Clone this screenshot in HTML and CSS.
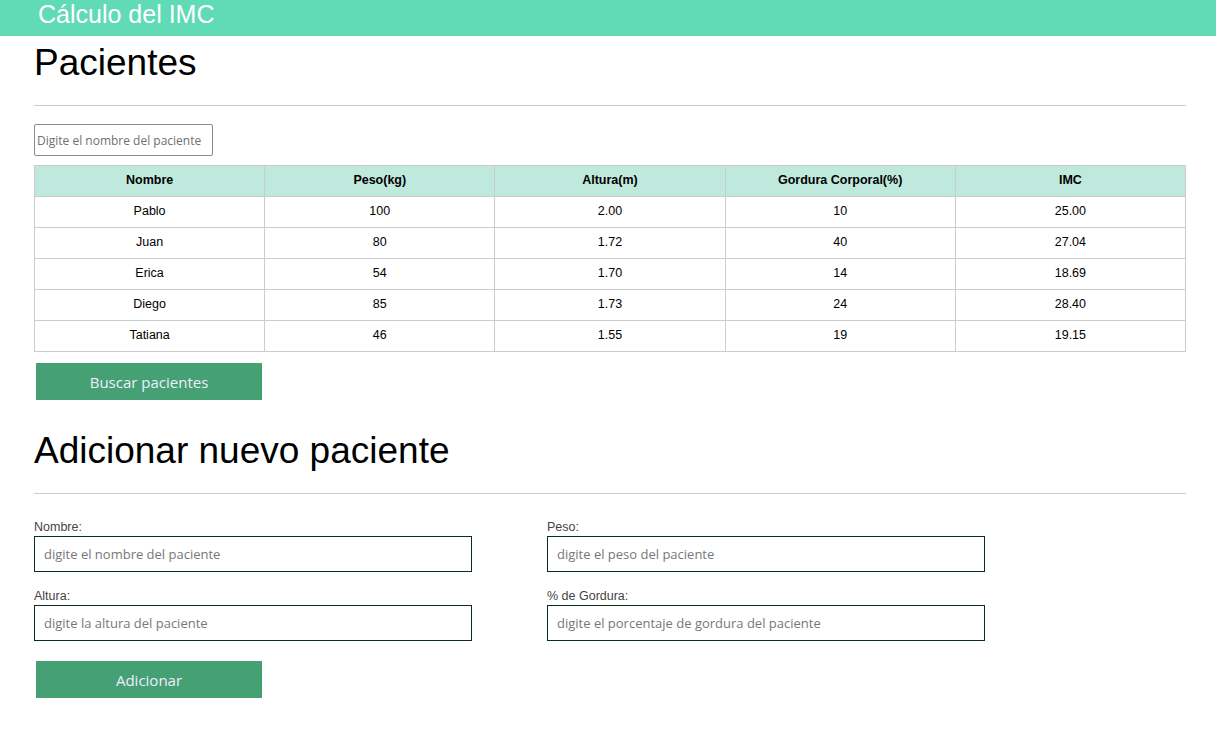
FILE: index.html
```html
<!DOCTYPE html>
<html lang="es">
<head>
<meta charset="utf-8">
<title>Cálculo del IMC</title>
<link rel="stylesheet" href="styles.css">
</head>
<body>
<header class="topbar">
  <h1 class="brand">Cálculo del IMC</h1>
</header>
<main class="container">
  <section class="section">
    <h2 class="section-title">Pacientes</h2>
    <hr class="divider">
    <input class="filter" type="text" placeholder="Digite el nombre del paciente">
    <table class="patients">
      <thead>
        <tr><th>Nombre</th><th>Peso(kg)</th><th>Altura(m)</th><th>Gordura Corporal(%)</th><th>IMC</th></tr>
      </thead>
      <tbody>
        <tr><td>Pablo</td><td>100</td><td>2.00</td><td>10</td><td>25.00</td></tr>
        <tr><td>Juan</td><td>80</td><td>1.72</td><td>40</td><td>27.04</td></tr>
        <tr><td>Erica</td><td>54</td><td>1.70</td><td>14</td><td>18.69</td></tr>
        <tr><td>Diego</td><td>85</td><td>1.73</td><td>24</td><td>28.40</td></tr>
        <tr><td>Tatiana</td><td>46</td><td>1.55</td><td>19</td><td>19.15</td></tr>
      </tbody>
    </table>
    <button class="btn" type="button">Buscar pacientes</button>
  </section>
  <section class="section add">
    <h2 class="section-title">Adicionar nuevo paciente</h2>
    <hr class="divider">
    <form class="form">
      <div class="field">
        <label class="label" for="nombre">Nombre:</label>
        <input class="input" id="nombre" type="text" placeholder="digite el nombre del paciente">
      </div>
      <div class="field">
        <label class="label" for="peso">Peso:</label>
        <input class="input" id="peso" type="text" placeholder="digite el peso del paciente">
      </div>
      <div class="field">
        <label class="label" for="altura">Altura:</label>
        <input class="input" id="altura" type="text" placeholder="digite la altura del paciente">
      </div>
      <div class="field">
        <label class="label" for="gordura">% de Gordura:</label>
        <input class="input" id="gordura" type="text" placeholder="digite el porcentaje de gordura del paciente">
      </div>
    </form>
    <button class="btn" type="button">Adicionar</button>
  </section>
</main>
</body>
</html>
```
FILE: styles.css
```css
* { box-sizing: border-box; }
html, body { margin: 0; padding: 0; background: #fff; }
body { font-family: "Liberation Sans", Arial, sans-serif; color: #000; }

.topbar {
  background: #61dab6;
  height: 36px;
  padding-left: 38px;
  overflow: visible;
}
.brand {
  margin: 0;
  font-weight: normal;
  font-size: 25px;
  line-height: 28px;
  color: #fff;
}

.container { padding: 0 30px 0 34px; }

.section-title {
  margin: 0;
  font-weight: normal;
  font-size: 37px;
  line-height: 52px;
}
.section:first-child .section-title { margin-top: 1px; }

.divider {
  border: 0;
  border-top: 1px solid #ccc;
  margin: 16px 0 18px;
}

.filter {
  display: block;
  width: 179px;
  height: 32px;
  border: 1px solid #8a8a9a;
  border-radius: 2px;
  padding: 0 2px;
  font-family: "Open Sans", sans-serif;
  font-size: 12px;
  color: #333;
  margin-bottom: 9px;
}
.filter::placeholder { color: #6f6f6f; }

.patients {
  width: 100%;
  border-collapse: collapse;
  table-layout: fixed;
  font-size: 12.5px;
}
.patients th, .patients td {
  border: 1px solid #cccccc;
  text-align: center;
  height: 31px;
  padding: 0 0 2px;
}
.patients th { background: #bfe9dd; font-weight: bold; }

.btn {
  display: block;
  width: 226px;
  height: 37px;
  margin: 11px 0 0 2px;
  border: 0;
  background: #45a173;
  color: #eef;
  font-family: "Open Sans", sans-serif;
  font-size: 15px;
  cursor: pointer;
}

.add { margin-top: 25px; }

.form {
  display: grid;
  grid-template-columns: 438px 438px;
  column-gap: 75px;
  row-gap: 17px;
  margin-top: 26px;
}
.field { display: flex; flex-direction: column; }
.label {
  font-size: 12.5px;
  color: #444;
  line-height: 14px;
  margin-bottom: 2px;
}
.input {
  height: 36px;
  border: 1px solid #0a2e1e;
  padding: 0 9px;
  font-family: "Open Sans", sans-serif;
  font-size: 13px;
  color: #333;
}
.input::placeholder { color: #777; }
.add .btn { margin-top: 20px; }
```
